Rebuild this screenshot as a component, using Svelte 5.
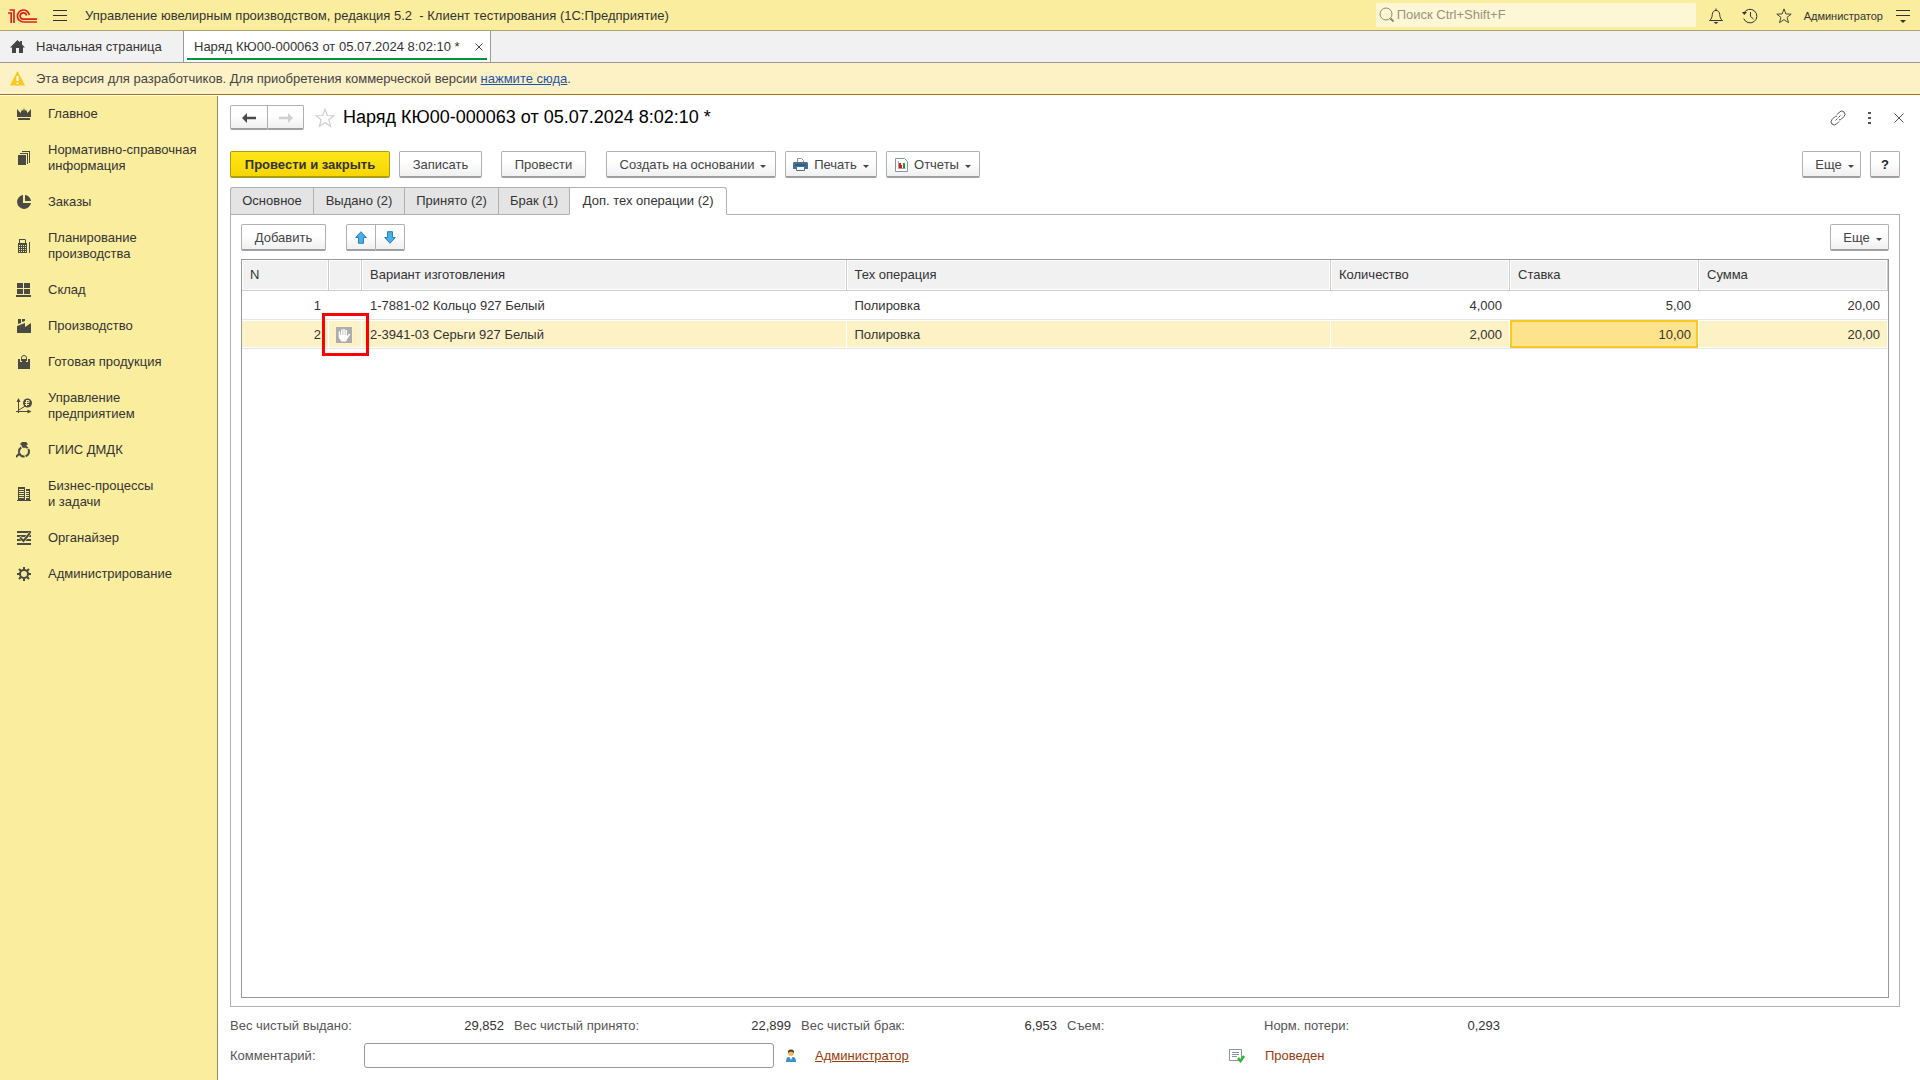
<script>
  const nav = [
    { icon: 'crown', lines: ['Главное'] },
    { icon: 'books', lines: ['Нормативно-справочная', 'информация'] },
    { icon: 'pie', lines: ['Заказы'] },
    { icon: 'calc', lines: ['Планирование', 'производства'] },
    { icon: 'store', lines: ['Склад'] },
    { icon: 'factory', lines: ['Производство'] },
    { icon: 'bag', lines: ['Готовая продукция'] },
    { icon: 'chart', lines: ['Управление', 'предприятием'] },
    { icon: 'ring', lines: ['ГИИС ДМДК'] },
    { icon: 'building', lines: ['Бизнес-процессы', 'и задачи'] },
    { icon: 'organizer', lines: ['Органайзер'] },
    { icon: 'gear', lines: ['Администрирование'] },
  ];
  const tabs = ['Основное', 'Выдано (2)', 'Принято (2)', 'Брак (1)', 'Доп. тех операции (2)'];
  const rows = [
    { n: 1, item: '1-7881-02 Кольцо 927 Белый', op: 'Полировка', qty: '4,000', rate: '5,00', sum: '20,00' },
    { n: 2, item: '2-3941-03 Серьги 927 Белый', op: 'Полировка', qty: '2,000', rate: '10,00', sum: '20,00', manual: true },
  ];
  let activeTab = $state(4);
  let selected = $state(1);
  let comment = $state('');
</script>

{#snippet navIcon(name)}
  <svg width="16" height="16" viewBox="0 0 16 16" fill="#4a4a42" aria-hidden="true">
    {#if name === 'crown'}
      <path d="M1 3l3.500 4L6 3.500 7 5l1-3 1 3 1-1.500L11.500 7 15 3v8H1z M2 12h12v2H2z" />
    {:else if name === 'books'}
      <path d="M2 5h8v10H2z M4 3h8v11h-1V4H4z M6 1h8v12h-1V2H6z" />
    {:else if name === 'pie'}
      <path d="M7 1v8h8A7 7 0 1 1 7 1z M9 1a6.500 6.500 0 0 1 6 6H9z" />
    {:else if name === 'calc'}
      <path fill-rule="evenodd" d="M3 1h6l1 1v3h1v10H2V5h1z M4 2v3h5V2z M3 7v1h1V7z M5 7v1h1V7z M7 7v1h1V7z M9 7v1h1V7z M3 9v1h1V9z M5 9v1h1V9z M7 9v1h1V9z M9 9v1h1V9z M3 11v1h1v-1z M5 11v1h1v-1z M7 11v1h1v-1z M9 11v1h1v-1z M3 13v1h1v-1z M5 13v1h1v-1z M7 13v1h1v-1z M9 13v1h1v-1z M13 4h1v11h-1z" />
    {:else if name === 'store'}
      <path d="M1 1h6v5H1z M8 1h6v5H8z M1 7h6v5H1z M8 7h6v5H8z M0 13h15v2H0z" />
    {:else if name === 'factory'}
      <path d="M2 1h3v4L2 6z M6 1h3v2L6 4z M1 8l8-3v4l6-4v10H1z" />
    {:else if name === 'bag'}
      <path d="M2 5h12v10H2z" />
      <path d="M5 8V4a3 3 0 0 1 6 0v4" fill="none" stroke="#fbed9e" stroke-width="2" />
      <path d="M5.500 7V4a2.500 2.500 0 0 1 5 0v3" fill="none" stroke="#4a4a42" />
    {:else if name === 'chart'}
      <path d="M2.500 15V3M0 13.500h14M3 12l3-2 2-1 2-3" fill="none" stroke="#4a4a42" />
      <path d="M2.500 0l2 4h-4z M15.500 13.500l-4-2v4z" />
      <circle cx="11.500" cy="5" r="4.500" />
      <path d="M10.500 2v6M10.500 2.500h2.500v2H9M9 6.500h4" fill="none" stroke="#fbed9e" />
    {:else if name === 'ring'}
      <circle cx="8" cy="9.500" r="5" fill="none" stroke="#4a4a42" stroke-width="2" stroke-dasharray="6 1" />
      <path d="M6 0h4l2 2-4 4-4-4z" />
      <path d="M0 15l4-4" stroke="#4a4a42" stroke-width="2" />
    {:else if name === 'building'}
      <path d="M1 14h14v1H1z M2 1h7v13H2z M10 3h4v11h-4z" />
      <path d="M3 3.500h5M3 5.500h5M3 7.500h5M3 9.500h5M3 11.500h5M10 5.500h3M10 7.500h3M10 9.500h3M10 11.500h3" stroke="#fbed9e" />
    {:else if name === 'organizer'}
      <path d="M1 1h14v2H1z M1 5h14v2H1z M1 9h14v2H1z M1 13h14v2H1z" />
      <path d="M3.500 7l4 4L14 3" fill="none" stroke="#fbed9e" stroke-width="3" />
      <path d="M4 7.500l3.500 3.500L14 3" fill="none" stroke="#4a4a42" stroke-width="2" />
    {:else}
      <circle cx="8" cy="8" r="4" fill="none" stroke="#4a4a42" stroke-width="2" />
      <path d="M8 1v3M8 12v3M1 8h3M12 8h3M3 3l2 2M11 11l2 2M13 3l-2 2M5 11l-2 2" stroke="#4a4a42" stroke-width="2" />
    {/if}
  </svg>
{/snippet}

{#snippet star(color, size)}
  <svg width={size} height={size} viewBox="0 0 18 18" fill="none" stroke={color} aria-hidden="true">
    <path d="M9 1l2.100 5.700 6 .2-4.700 3.700 1.700 5.900L9 13.100l-5.100 3.400 1.700-5.900L.9 6.900l6-.2z" />
  </svg>
{/snippet}

<div class="app">
  <header class="topbar">
    <svg class="logo" width="30" height="16" viewBox="0 0 30 16" fill="none" stroke="#d9231c" stroke-width="1.700" aria-label="1C">
      <path d="M0 5h3.200V15" />
      <path d="M1.500 2h4.500V15" />
      <path d="M21.300 7A6 6 0 1 0 15.500 14H29" />
      <path d="M18.500 7.500A3.200 3.200 0 1 0 15.500 11.200H29" />
    </svg>
    <button class="plain burger" aria-label="Меню">
      <svg width="14" height="12" viewBox="0 0 14 12" stroke="#333"><path d="M0 .5h14M0 5.500h14M0 10.500h14" /></svg>
    </button>
    <span class="apptitle">Управление ювелирным производством, редакция 5.2 &nbsp;- Клиент тестирования (1С:Предприятие)</span>
    <label class="search">
      <svg width="16" height="16" viewBox="0 0 16 16" fill="none" stroke="#8f8a6c"><circle cx="7" cy="7" r="6" /><path d="M11.500 11.500l3 3" stroke-width="2" /></svg>
      <input type="text" placeholder="Поиск Ctrl+Shift+F" aria-label="Поиск" />
    </label>
    <div class="tools">
      <button class="plain" aria-label="Уведомления">
        <svg width="16" height="16" viewBox="0 0 16 16" fill="none" stroke="#333"><path d="M1.500 12.500c2-1.500 2.500-3 2.800-6C4.600 3.500 6 2.500 8 2.500s3.400 1 3.700 4c.3 3 .8 4.500 2.800 6zM8 .5v2" /><path d="M5.500 14h5L8 16z" fill="#333" stroke="none" /></svg>
      </button>
      <button class="plain" aria-label="История">
        <svg width="16" height="16" viewBox="0 0 16 16" fill="none" stroke="#333"><path d="M2 5a6.800 6.800 0 1 1-.3 5.500M8.500 4v4.500l3 2.500" /><path d="M0 4h5L2.300 7z" fill="#333" stroke="none" /></svg>
      </button>
      <button class="plain" aria-label="Избранное">{@render star('#333', 16)}</button>
    </div>
    <a class="user" href="#user">Администратор</a>
    <button class="plain" aria-label="Настройки">
      <svg width="14" height="14" viewBox="0 0 14 14"><path d="M0 1.500h14M0 6.500h14" stroke="#333" /><path d="M4 11h6l-3 3z" fill="#333" /></svg>
    </button>
  </header>

  <nav class="windows" aria-label="Открытые окна">
    <a class="home" href="#home">
      <svg width="15" height="13" viewBox="0 0 15 13" fill="#444"><path d="M7.500 0l2.500 2.500V1h2v3.500L15 7.500h-2V13H9V8H6v5H2V7.500H0z" /></svg>
      <span>Начальная страница</span>
    </a>
    <div class="window">
      <a href="#doc">Наряд КЮ00-000063 от 05.07.2024 8:02:10 *</a>
      <button class="plain" aria-label="Закрыть вкладку">
        <svg width="8" height="8" viewBox="0 0 8 8" stroke="#444"><path d="M.5.500l7 7M7.500.500l-7 7" /></svg>
      </button>
    </div>
  </nav>

  <div class="notice">
    <svg width="15" height="15" viewBox="0 0 15 15"><path d="M7.500 0L15 14.500H0z" fill="#fdc81d" /><path d="M7.500 5v5M7.500 11.500v1.500" stroke="#fff" stroke-width="2" /></svg>
    <p>Эта версия для разработчиков. Для приобретения коммерческой версии <a href="#buy">нажмите сюда</a>.</p>
  </div>

  <div class="body">
    <nav class="sidebar" aria-label="Разделы">
      {#each nav as item}
        <a href="#section">
          {@render navIcon(item.icon)}
          <span>{#each item.lines as line, i}{#if i}<br />{/if}{line}{/each}</span>
        </a>
      {/each}
    </nav>

    <main>
      <div class="heading">
        <div class="group">
          <button class="btn step" aria-label="Назад"><svg width="14" height="10" viewBox="0 0 14 10"><path d="M0 5l5-5v3.800h9v2.400H5V10z" fill="#4a4a4a" /></svg></button>
          <button class="btn step" aria-label="Вперед"><svg width="14" height="10" viewBox="0 0 14 10"><path d="M14 5L9 0v3.800H0v2.400h9V10z" fill="#cfcfcf" /></svg></button>
        </div>
        <button class="plain fav" aria-label="В избранное">{@render star('#cccccc', 20)}</button>
        <h1>Наряд КЮ00-000063 от 05.07.2024 8:02:10 *</h1>
        <div class="formtools">
          <button class="plain" aria-label="Ссылка"><svg width="16" height="16" viewBox="0 0 16 16" fill="none" stroke="#555"><path d="M7 4.500L9.500 2a3 3 0 0 1 4.500 4.500L11.500 9a3 3 0 0 1-2.500.8M9 11.500L6.500 14A3 3 0 0 1 2 9.500L4.500 7A3 3 0 0 1 7 6.200M5.500 10.500l2-2M8.500 7.500l2-2" /></svg></button>
          <button class="plain" aria-label="Дополнительно"><svg width="4" height="12" viewBox="0 0 4 12" fill="#555"><path d="M0 0h3v2H0zM0 5h3v2H0zM0 10h3v2H0z" /></svg></button>
          <button class="plain" aria-label="Закрыть"><svg width="10" height="10" viewBox="0 0 10 10" stroke="#555"><path d="M.5.500l9 9M9.500.500l-9 9" /></svg></button>
        </div>
      </div>

      <div class="commands">
        <button class="btn primary">Провести и закрыть</button>
        <button class="btn save">Записать</button>
        <button class="btn post">Провести</button>
        <button class="btn create">Создать на основании <i class="caret"></i></button>
        <button class="btn print">
          <svg width="15" height="15" viewBox="0 0 15 15"><path d="M4.500 5V1.500h4l2 2V5" fill="#fff" stroke="#8795a5" /><path d="M1 5h13l1 1v6H0V6z" fill="#44709a" /><path d="M2 8h11" stroke="#26486b" /><path d="M3.500 9.500h8v4h-8z" fill="#fff" stroke="#44709a" /></svg>
          Печать <i class="caret"></i>
        </button>
        <button class="btn reports">
          <svg width="13" height="14" viewBox="0 0 13 14"><path d="M.5.500h9l3 3v10H.5z" fill="#fff" stroke="#8795a5" /><path d="M3.500 3v7.500h7" stroke="#9aa5b1" fill="none" /><path d="M4 5h2v5H4z" fill="#e11" /><path d="M6 7h1v3H6z" fill="#e11" /><path d="M8 5h2v5H8z" fill="#292" /></svg>
          Отчеты <i class="caret"></i>
        </button>
        <button class="btn more push">Еще <i class="caret"></i></button>
        <button class="btn help">?</button>
      </div>

      <div class="tabs" role="tablist">
        {#each tabs as tab, i}
          <button role="tab" class:active={activeTab === i} aria-selected={activeTab === i} onclick={() => (activeTab = i)}>{tab}</button>
        {/each}
      </div>

      <section class="panel">
        <div class="commands inner">
          <button class="btn add">Добавить</button>
          <div class="group">
            <button class="btn move" aria-label="Вверх"><svg width="12" height="13" viewBox="0 0 12 13"><path d="M6 .7l5.300 5.800H8.500v5.800h-5V6.500H.7z" fill="#45b0ea" stroke="#2b7fb5" /></svg></button>
            <button class="btn move" aria-label="Вниз"><svg width="12" height="13" viewBox="0 0 12 13"><path d="M6 12.300L.7 6.500h2.800V.7h5v5.800h2.800z" fill="#45b0ea" stroke="#2b7fb5" /></svg></button>
          </div>
          <button class="btn more push">Еще <i class="caret"></i></button>
        </div>

        <div class="grid">
          <table>
            <colgroup>
              <col class="c-n" /><col class="c-flag" /><col /><col /><col class="c-qty" /><col class="c-money" /><col class="c-money" />
            </colgroup>
            <thead>
              <tr><th>N</th><th aria-label="Ручная правка"></th><th>Вариант изготовления</th><th>Тех операция</th><th>Количество</th><th>Ставка</th><th>Сумма</th></tr>
            </thead>
            <tbody>
              {#each rows as row, i}
                <tr class:selected={selected === i} onclick={() => (selected = i)}>
                  <td class="num">{row.n}</td>
                  <td class="flag">
                    {#if row.manual}
                      <svg width="16" height="16" viewBox="0 0 16 16"><path d="M0 0h16v16H0z" fill="#adadad" /><path d="M3.500 5v5M5.800 3v6M8 2.500V9M10.200 3.500V9M13.300 7.500L11 11" fill="none" stroke="#fff" stroke-width="1.500" stroke-linecap="round" /><path d="M2.800 8h8.200v1l1.500-.5-1.500 4-1 2H5.500L3 11z" fill="#fff" /></svg>
                      <span class="marker"></span>
                    {/if}
                  </td>
                  <td>{row.item}</td>
                  <td>{row.op}</td>
                  <td class="num">{row.qty}</td>
                  <td class="num rate">{row.rate}</td>
                  <td class="num">{row.sum}</td>
                </tr>
              {/each}
            </tbody>
          </table>
        </div>
      </section>

      <dl class="totals">
        <div class="t1"><dt>Вес чистый выдано:</dt><dd>29,852</dd></div>
        <div class="t2"><dt>Вес чистый принято:</dt><dd>22,899</dd></div>
        <div class="t3"><dt>Вес чистый брак:</dt><dd>6,953</dd></div>
        <div class="t4"><dt>Съем:</dt><dd></dd></div>
        <div class="t5"><dt>Норм. потери:</dt><dd>0,293</dd></div>
      </dl>

      <div class="footer">
        <label for="comment">Комментарий:</label>
        <input id="comment" type="text" bind:value={comment} />
        <svg width="10" height="13" viewBox="0 0 10 13"><path d="M0 13q0-5 3-5h4q3 0 3 5z" fill="#3b91c8" /><path d="M3.500 8L5 11l1.500-3z" fill="#fff" /><circle cx="5" cy="4" r="3" fill="#edb95c" /><path d="M2 4Q1.500.5 5 .5T8 4Q7 2.500 5 2.500T2 4z" fill="#4a3a20" /></svg>
        <a class="author" href="#author">Администратор</a>
        <svg width="16" height="14" viewBox="0 0 16 14"><path d="M.5.500h12v11H.5z" fill="#fff" stroke="#8795a5" /><path d="M3 3.500h7M3 5.500h7M3 7.500h5" stroke="#8795a5" /><path d="M9 9l2.500 3L15 7" fill="none" stroke="#2db336" stroke-width="2.500" /></svg>
        <span class="status">Проведен</span>
      </div>
    </main>
  </div>
</div>

<style>
  :global(body) { margin: 0; background: #fff; }
  .app {
    min-height: 100vh;
    display: flex;
    flex-direction: column;
    font: 13px/16px "Liberation Sans", Arial, sans-serif;
    color: #333;
  }
  .app * { box-sizing: border-box; }
  svg { display: block; flex: none; }
  a { color: inherit; text-decoration: none; }
  input, button { font: inherit; color: inherit; }
  .plain { border: 0; padding: 0; background: none; display: flex; align-items: center; justify-content: center; }

  .topbar { height: 31px; display: flex; align-items: center; background: #fbed9e; border-bottom: 1px solid #aaa470; padding: 1px 10px 0 8px; }
  .burger { margin-left: 15px; }
  .apptitle { margin-left: 18px; flex: 1; white-space: nowrap; }
  .search { width: 320px; height: 24px; margin-bottom: 2px; display: flex; align-items: center; gap: 2px; padding: 0 3px; background: #fef7d6; border-radius: 2px; }
  .search input { flex: 1; min-width: 0; border: 0; padding: 0; background: none; outline: 0; }
  .search input::placeholder { color: #98937b; opacity: 1; }
  .tools { display: flex; gap: 18px; margin: 0 12px; }
  .user { font-size: 11px; margin-right: 13px; }

  .windows { height: 32px; display: flex; background: #f1f1f1; border-bottom: 1px solid #999; }
  .home { width: 183px; display: flex; align-items: center; gap: 11px; padding-left: 10px; white-space: nowrap; }
  .window { min-width: 308px; display: flex; align-items: center; justify-content: space-between; gap: 9px; padding: 0 7px 0 10px; background: linear-gradient(#009646, #009646) 3px 27px / calc(100% - 6px) 2px no-repeat #fff; border: 1px solid #999; border-width: 0 1px; white-space: nowrap; }

  .notice { height: 32px; display: flex; align-items: center; gap: 11px; padding-left: 10px; background: #fdf1c6; border-bottom: 1px solid #96790f; color: #444; }
  .notice p { margin: 0; }
  .notice a { color: #1d54a7; text-decoration: underline; }

  .body { flex: 1; display: flex; margin-top: 1px; }
  .sidebar { width: 218px; flex: none; background: #fbed9e; border-right: 1px solid #8f8a60; }
  .sidebar a { display: flex; align-items: center; gap: 16px; padding: 10px 8px 10px 16px; white-space: nowrap; }

  main { flex: 1; min-width: 0; display: flex; flex-direction: column; padding: 9px 20px 12px 12px; }
  .heading { display: flex; align-items: center; height: 25px; }
  .heading h1 { margin: 0; padding-bottom: 2px; font-size: 18px; line-height: 24px; font-weight: 400; color: #000; flex: 1; white-space: nowrap; }
  .fav { margin: 0 8px 0 11px; }
  .formtools { display: flex; align-items: center; gap: 22px; margin-right: -4px; }

  .btn { height: 27px; flex: none; display: flex; align-items: center; justify-content: center; padding: 1px 0 0; border: 1px solid #b0b0b0; border-bottom: 2px solid #a0a0a0; border-radius: 2px; background: linear-gradient(#fff 40%, #f0f0f0); color: #444; white-space: nowrap; }
  .group { display: flex; }
  .group .btn + .btn { border-left: 0; border-radius: 0 2px 2px 0; }
  .group .btn:first-child { border-radius: 2px 0 0 2px; }
  .group .step { width: 36px; height: 25px; }
  .group .step:first-child { width: 38px; }
  .commands { display: flex; margin-top: 21px; }
  .primary { width: 160px; font-weight: 700; color: #333; background: linear-gradient(#ffe61a, #f7d600); border-color: #b09c10; }
  .save { width: 83px; margin-left: 9px; }
  .post { width: 85px; margin-left: 19px; }
  .create { width: 170px; margin-left: 20px; padding-left: 4px; }
  .print { width: 92px; margin-left: 9px; gap: 6px; }
  .reports { width: 94px; margin-left: 9px; gap: 6px; }
  .more { width: 59px; padding-left: 6px; }
  .push { margin-left: auto; }
  .help { width: 30px; margin-left: 9px; font-weight: 700; color: #222; }
  .caret { width: 0; border: 3px solid transparent; border-top-color: #444; border-bottom: 0; margin: 4px 0 0 6px; }
  .print .caret, .reports .caret { margin-left: 0; }

  .tabs { display: flex; margin: 9px 0 -1px; position: relative; }
  .tabs button { height: 28px; padding: 0 11px; background: #e4e4e4; border: 1px solid #b0b0b0; border-right-width: 0; white-space: nowrap; }
  .tabs button:nth-child(1) { min-width: 83px; border-radius: 3px 0 0 0; }
  .tabs button:nth-child(2) { min-width: 91px; }
  .tabs button:nth-child(3) { min-width: 94px; }
  .tabs button:nth-child(4) { min-width: 71px; }
  .tabs button:nth-child(5) { min-width: 158px; border-right-width: 1px; border-radius: 0 3px 0 0; }
  .tabs .active { background: #fff; border-bottom-color: #fff; }

  .panel { flex: 1; display: flex; flex-direction: column; border: 1px solid #b0b0b0; padding: 9px 10px 8px; }
  .inner { margin: 0 0 8px; }
  .add { width: 85px; margin-right: 20px; }
  .group .move { width: 29px; }
  .group .move:first-child { width: 30px; }
  .grid { flex: 1; border: 1px solid #999; }

  table { width: 100%; border-collapse: separate; border-spacing: 0; table-layout: fixed; }
  .c-n { width: 87px; }
  .c-flag { width: 33px; }
  .c-qty { width: 179px; }
  .c-money { width: 189px; }
  th, td { padding: 0 8px; text-align: left; font-weight: 400; white-space: nowrap; border-right: 1px solid #fff; }
  th { height: 31px; background: #f1f1f1; border-right: 1px solid #ccc; border-bottom: 1px solid #ccc; box-shadow: inset 0 0 0 1px #fff; }
  td { height: 29px; padding-top: 2px; border-bottom: 1px solid #e4e4e4; }
  .num { text-align: right; padding-right: 7px; }
  .flag { position: relative; padding: 1px 0 0 7px; }
  .selected td { background: #fdf1c6; box-shadow: inset 0 -1px #fff, inset 0 1px #fff; }
  .selected .rate { background: #fde38c; box-shadow: inset 0 0 0 2px #fcc71e; }
  .marker { position: absolute; inset: -7px -8px -8px -7px; border: 3px solid #f00; z-index: 1; pointer-events: none; }

  .totals { display: flex; margin: 11px 0 0; }
  .totals div { display: flex; justify-content: space-between; margin-right: 10px; color: #555; }
  dd { margin: 0; color: #333; }
  .totals .t1 { width: 274px; }
  .totals .t2 { width: 277px; }
  .totals .t3 { width: 256px; }
  .totals .t4 { width: 187px; }
  .totals .t5 { width: 236px; }

  .footer { display: flex; align-items: center; margin-top: 9px; color: #555; }
  .footer label { width: 134px; }
  .footer input { width: 410px; height: 25px; margin-right: 12px; border: 1px solid #999; border-radius: 3px; padding: 0 6px; background: #fff; }
  .author { width: 414px; margin-left: 19px; color: #963c0a; text-decoration: underline; }
  .status { margin-left: 20px; color: #963c0a; }
</style>
